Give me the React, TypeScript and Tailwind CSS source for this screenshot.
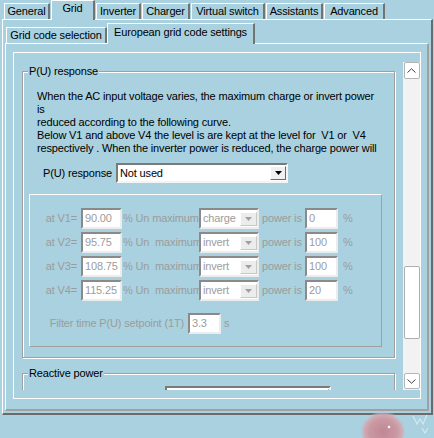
import React from 'react';

const tabs = [
  { label: 'General', cls: 'ml-[4px] w-[46px]' },
  { label: 'Grid', cls: 'ml-[1px] w-[44px]', selected: true },
  { label: 'Inverter', cls: 'ml-[1px] w-[45px]' },
  { label: 'Charger', cls: 'ml-[1px] w-[48px]' },
  { label: 'Virtual switch', cls: 'ml-[1px] w-[74px]' },
  { label: 'Assistants', cls: 'ml-[1px] w-[57px]' },
  { label: 'Advanced', cls: 'ml-[1px] w-[61px]' },
];

const rows = [
  { at: 'at V1=', v: '90.00', un: '% Un maximum', mode: 'charge', p: '0' },
  { at: 'at V2=', v: '95.75', un: '% Un  maximum', mode: 'invert', p: '100' },
  { at: 'at V3=', v: '108.75', un: '% Un  maximum', mode: 'invert', p: '100' },
  { at: 'at V4=', v: '115.25', un: '% Un  maximum', mode: 'invert', p: '20' },
];

const Tab = ({ label, cls, selected }: { label: string; cls: string; selected?: boolean }) =>
  selected ? (
    <div className={`${cls} h-[20px] mb-[-1px] relative z-10 bg-[#a9d1df] border-t border-l border-r-2 border-t-white border-l-white border-r-[#737373] pt-[1px] text-center`}>
      {label}
    </div>
  ) : (
    <div className={`${cls} h-[16px] border-t border-l border-r-2 border-t-white border-l-white border-r-[#737373] flex items-center justify-center`}>
      {label}
    </div>
  );

const Field = ({ value, w }: { value: string; w: string }) => (
  <div className={`${w} h-[21px] bg-white border-2 border-t-[#8a8a8a] border-l-[#8a8a8a] border-b-[#ececec] border-r-[#ececec] pl-[2px] flex items-center text-[#9c9c9c]`}>
    {value}
  </div>
);

const Arrow = ({ color }: { color: string }) => (
  <svg width="7" height="4" viewBox="0 0 7 4">
    <path d="M0 0h7L3.5 4z" fill={color} />
  </svg>
);

const MiniCombo = ({ value }: { value: string }) => (
  <div className="w-[60px] h-[21px] bg-white border-2 border-t-[#8a8a8a] border-l-[#8a8a8a] border-b-[#ececec] border-r-[#ececec] flex items-center pl-[2px] text-[#9c9c9c]">
    <span className="flex-1 overflow-hidden">{value}</span>
    <div className="w-[17px] h-[14px] mt-[1px] bg-[#ececec] border-t border-l border-white border-b border-r border-b-[#c8c8c8] border-r-[#c8c8c8] flex items-center justify-center">
      <Arrow color="#a0a0a0" />
    </div>
  </div>
);

const Chevron = ({ up }: { up?: boolean }) => (
  <svg width="9" height="5" viewBox="0 0 9 5">
    <path d={up ? 'M0.5 4.5L4.5 0.8L8.5 4.5' : 'M0.5 0.5L4.5 4.2L8.5 0.5'} stroke="#444" strokeWidth="1" fill="none" />
  </svg>
);

export default function App() {
  return (
    <div className="w-[434px] h-[438px] relative overflow-hidden bg-[#a9d1df] text-black text-[11px] leading-[13px] tracking-[-0.15px] font-['Liberation_Sans',Arial,sans-serif]">
      {/* faint watermark */}
      <svg className="absolute left-[356px] top-[408px]" width="78" height="30" viewBox="0 0 78 30">
        <defs>
          <radialGradient id="wm" cx="0.5" cy="0.5" r="0.5">
            <stop offset="0" stopColor="#c47a86" />
            <stop offset="0.6" stopColor="#cf8e98" />
            <stop offset="0.85" stopColor="#d7a8b1" />
            <stop offset="1" stopColor="#a9d1df" stopOpacity="0" />
          </radialGradient>
        </defs>
        <ellipse cx="27" cy="24" rx="23" ry="21" fill="url(#wm)" opacity="0.85" />
        <circle cx="33" cy="19" r="1.3" fill="#fff" opacity="0.9" />
        <path d="M57 8l4 8l3-5l3 5l4-9M66 20l3 5l3-5" stroke="#fff" strokeWidth="1.2" fill="none" opacity="0.5" />
      </svg>

      <div className="flex items-end h-[19px]">
        {tabs.map((t) => (
          <Tab key={t.label} {...t} />
        ))}
      </div>

      <div className="ml-[2px] w-[431px] h-[396px] border-t border-l border-r-2 border-b-2 border-t-white border-l-white border-r-[#6b6b6b] border-b-[#6b6b6b] pt-[3px] px-[2px] flex flex-col">
        <div className="flex items-end h-[20px] pl-[1px]">
          <div className="w-[101px] h-[16px] border-t border-l border-r-2 border-t-white border-l-white border-r-[#737373] flex items-center justify-center">
            Grid code selection
          </div>
          <div className="w-[148px] h-[21px] mb-[-1px] relative z-10 bg-[#a9d1df] border-t border-l border-r-2 border-t-white border-l-white border-r-[#737373] pt-[2px] text-center">
            European grid code settings
          </div>
        </div>

        <div className="h-[368px] border-t border-l border-r-2 border-b-2 border-t-white border-l-white border-r-[#a0a0a0] border-b-[#a0a0a0] pt-[8px] pl-[7px]">
          <div className="w-[408px] h-[347px] border border-white flex pt-[9px] pb-[8px]">
            <div className="w-[389px] h-full overflow-hidden flex flex-col">
              {/* P(U) response group */}
              <div className="ml-[8px] mt-[9px] w-[373px] h-[287px] shrink-0 relative border border-[#a0a0a0] shadow-[inset_1px_1px_0_#fff,1px_1px_0_#fff] flex flex-col">
                <span className="absolute left-[5px] top-[-7px] px-[1px] bg-[#a9d1df]">P(U) response</span>
                <div className="ml-[14px] mt-[18px] whitespace-pre">
                  {'When the AC input voltage varies, the maximum charge or invert power\nis\nreduced according to the following curve.\nBelow V1 and above V4 the level is are kept at the level for  V1 or  V4\nrespectively . When the inverter power is reduced, the charge power will'}
                </div>
                <div className="ml-[20px] mt-[8px] flex items-center h-[20px]">
                  <span className="w-[73px]">P(U) response</span>
                  <div className="w-[172px] h-[20px] bg-white border-2 border-t-[#7a7a7a] border-l-[#7a7a7a] border-b-[#f4f4f4] border-r-[#f4f4f4] flex items-center pl-[2px]">
                    <span className="flex-1">Not used</span>
                    <div className="w-[16px] h-[14px] bg-[#f0f0f0] border-t border-l border-white border-b border-r border-b-[#6b6b6b] border-r-[#6b6b6b] flex items-center justify-center">
                      <Arrow color="#000" />
                    </div>
                  </div>
                </div>

                <div className="ml-[6px] mt-[11px] w-[353px] h-[153px] border border-t-white border-l-white border-b-[#a0a0a0] border-r-[#a0a0a0] pt-[13px] text-[#9c9c9c] flex flex-col gap-[3px]">
                  {rows.map((r) => (
                    <div key={r.at} className="flex items-center h-[21px]">
                      <span className="w-[47px] text-right">{r.at}</span>
                      <div className="ml-[4px]">
                        <Field value={r.v} w="w-[41px]" />
                      </div>
                      <span className="ml-[1px] w-[76px] whitespace-pre">{r.un}</span>
                      <MiniCombo value={r.mode} />
                      <span className="ml-[3px] w-[43px]">power is</span>
                      <Field value={r.p} w="w-[33px]" />
                      <span className="ml-[5px]">%</span>
                    </div>
                  ))}
                  <div className="mt-[9px] flex items-center h-[21px]">
                    <span className="w-[154px] text-right">Filter time P(U) setpoint (1T)</span>
                    <div className="ml-[4px]">
                      <Field value="3.3" w="w-[33px]" />
                    </div>
                    <span className="ml-[3px]">s</span>
                  </div>
                </div>
              </div>

              {/* Reactive power group */}
              <div className="ml-[8px] mt-[15px] w-[373px] h-[100px] shrink-0 relative border border-[#a0a0a0] shadow-[inset_1px_1px_0_#fff,1px_1px_0_#fff] flex flex-col">
                <span className="absolute left-[5px] top-[-7px] px-[1px] bg-[#a9d1df]">Reactive power</span>
                <div className="ml-[142px] mt-[12px] w-[166px] h-[20px] bg-white border-2 border-t-[#7a7a7a] border-l-[#7a7a7a] border-b-[#f4f4f4] border-r-[#f4f4f4] flex justify-end pt-[1px]">
                  <div className="w-[16px] h-[14px] bg-[#f0f0f0] border-t border-l border-white border-b border-r border-b-[#6b6b6b] border-r-[#6b6b6b]" />
                </div>
              </div>
            </div>

            {/* scrollbar */}
            <div className="w-[17px] h-full bg-[#f2f2f2] flex flex-col items-center">
              <div className="w-[16px] h-[17px] bg-white border border-[#b5b5b5] rounded-[2px] flex items-center justify-center">
                <Chevron up />
              </div>
              <div className="w-[16px] h-[73px] mt-[187px] bg-white border border-[#b0b0b0] rounded-[2px]" />
              <div className="w-[16px] h-[16px] mt-auto mb-[1px] bg-white border border-[#b5b5b5] rounded-[2px] flex items-center justify-center">
                <Chevron />
              </div>
            </div>
          </div>
        </div>
      </div>
    </div>
  );
}
